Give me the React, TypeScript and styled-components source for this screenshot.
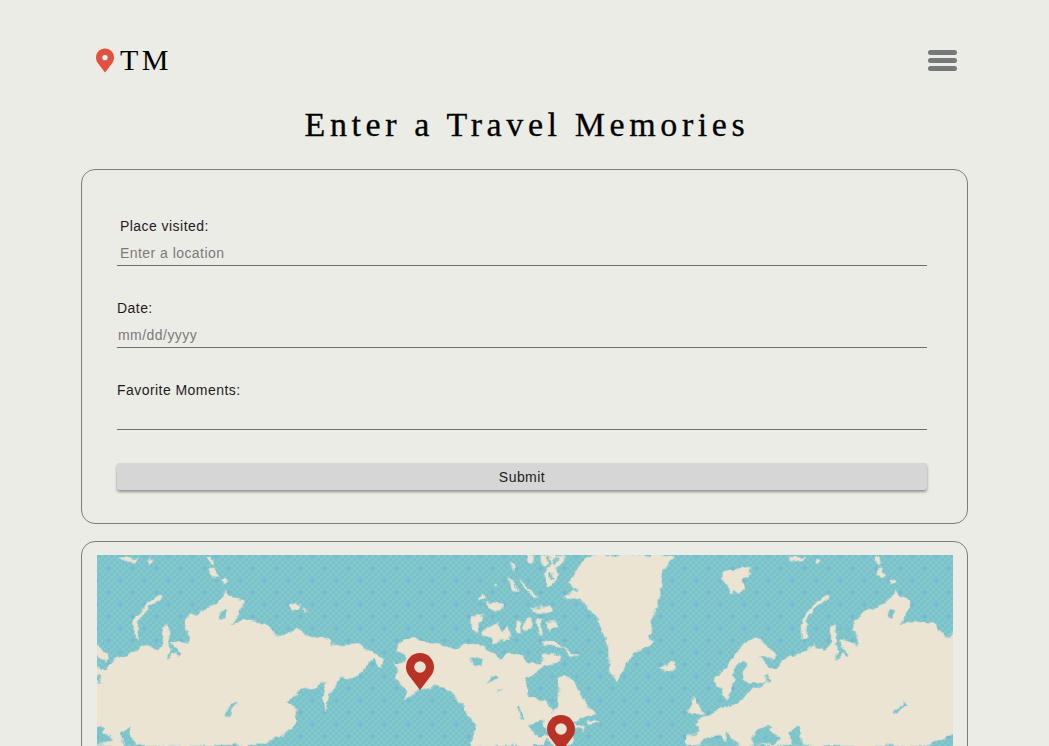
import React from "react";
import styled, { createGlobalStyle } from "styled-components";

const GlobalStyle = createGlobalStyle`
  html, body {
    margin: 0;
    height: 746px;
    overflow: hidden;
    background: #ecece6;
  }
`;

const Page = styled.div`
  padding: 0 81px;
  font-family: "Liberation Sans", Arial, sans-serif;
  color: #1c1c1c;
`;

const Header = styled.header`
  height: 103px;
  padding: 0 11px 0 15px;
  display: flex;
  align-items: flex-end;
  justify-content: space-between;
  box-sizing: border-box;
`;

const Brand = styled.div`
  display: flex;
  align-items: center;
  gap: 6px;
  height: 60px;
  margin-bottom: 13px;
  font-family: "Liberation Serif", serif;
  font-size: 30px;
  letter-spacing: 3.4px;
  color: #000;
`;

const Burger = styled.button`
  width: 29px;
  height: 60px;
  margin-bottom: 13px;
  padding: 0;
  border: 0;
  background: none;
  display: flex;
  flex-direction: column;
  justify-content: center;
  gap: 3px;
`;

const BurgerBar = styled.span`
  display: block;
  height: 5px;
  border-radius: 3px;
  background: #76787a;
`;

const Title = styled.h1`
  margin: 0 0 25px;
  padding-left: 5px;
  height: 41px;
  line-height: 44px;
  text-align: center;
  font-family: "Liberation Serif", serif;
  font-size: 34px;
  font-weight: 400;
  letter-spacing: 4.6px;
  -webkit-text-stroke: 0.3px #000;
  color: #000;
`;

const Card = styled.section`
  border: 1px solid #7f7f7a;
  border-radius: 14px;
`;

const FormCard = styled(Card)`
  padding: 48px 40px 33px 35px;
  margin-bottom: 17px;
`;

const Field = styled.label`
  display: block;
  margin-bottom: 34px;

  &:last-of-type {
    margin-bottom: 33px;
  }
`;

const FieldLabel = styled.span<{ $indent?: boolean }>`
  display: block;
  height: 17px;
  line-height: 17px;
  padding-left: ${(p) => (p.$indent ? 3 : 0)}px;
  font-size: 14px;
  letter-spacing: 0.45px;
`;

const FieldInput = styled.input<{ $indent?: boolean }>`
  display: block;
  width: 100%;
  height: 31px;
  box-sizing: border-box;
  padding: 6px 0 0 ${(p) => (p.$indent ? 3 : 1)}px;
  border: 0;
  border-bottom: 1px solid #6f6f6b;
  border-radius: 0;
  background: transparent;
  outline: none;
  font-family: "Liberation Sans", Arial, sans-serif;
  font-size: 14px;
  letter-spacing: 0.45px;

  &::placeholder {
    color: #7b7b78;
    opacity: 1;
  }
`;

const SubmitButton = styled.button`
  display: block;
  width: 100%;
  height: 27px;
  padding: 1px 0 0;
  border: 0;
  border-radius: 3px;
  background: #d6d6d6;
  box-shadow: 0 2px 3px rgba(0, 0, 0, 0.38);
  font-family: "Liberation Sans", Arial, sans-serif;
  font-size: 14px;
  letter-spacing: 0.45px;
  color: #1c1c1c;
`;

const MapCard = styled(Card)`
  padding: 13px 14px 14px 15px;
`;

const MapFrame = styled.div`
  position: relative;
  height: 191px;
  overflow: hidden;
  background: #7cc3cc;
`;

const MapArt = styled.svg`
  display: block;
  width: 856px;
  height: 191px;
`;

const Marker = styled.svg<{ $left: number; $top: number }>`
  position: absolute;
  left: ${(p) => p.$left}px;
  top: ${(p) => p.$top}px;
  width: 28px;
  height: 37px;
`;

const LAND = "#ece4d2";

// coastlines are traced in map units (3 units = 1px)
const EURASIA =
  "M497,618 L497,590 L540,575 L525,545 L550,530 L600,505 L640,498 L670,480 L685,455 L730,440 L735,425 L690,430 L675,420 L665,400 L685,370 L660,365 L640,400 L640,440 L620,480 L605,445 L585,440 L585,410 L620,385 L640,345 L670,310 L710,295 L745,320 L770,345 L760,365 L735,350 L722,345 L745,385 L760,390 L790,360 L830,345 L860,325 L885,315 L915,330 L930,320 L930,260 L945,255 L955,300 L1005,310 L1000,270 L1000,240 L1040,215 L1080,195 L1110,175 L1125,150 L1145,175 L1170,180 L1170,205 L1135,255 L1175,240 L1244,250 L1274,290 L1309,280 L1334,262 L1374,290 L1429,295 L1444,315 L1484,315 L1514,308 L1544,325 L1569,340 L1594,360 L1589,378 L1564,360 L1544,375 L1534,400 L1484,415 L1462,408 L1449,440 L1429,465 L1419,520 L1412,480 L1414,450 L1424,425 L1384,440 L1344,450 L1302,490 L1334,510 L1324,560 L1284,590 L1244,605 L1209,618 Z";

const EURASIA_ISLANDS = [
  "M1066,50 L1078,50 L1082,72 L1072,75 Z",
  "M1070,85 L1088,82 L1098,108 L1082,113 Z",
  "M1108,120 L1122,115 L1128,130 L1112,135 Z",
  "M1312,195 L1328,190 L1346,200 L1338,212 L1318,210 Z",
  "M1350,207 L1376,211 L1360,214 Z",
  "M800,52 L826,50 L860,55 L845,64 L815,60 Z",
  "M890,52 L906,60 L895,70 Z",
];

const EURASIA_WATERS = [
  "M945,358 L965,335 L955,300 L960,272",
  "M965,325 L985,345",
  "M972,265 L1003,280 L1010,310",
  "M738,405 L745,430",
  "M1154,487 L1124,522",
];

const EURASIA_BASINS = [
  "M540,618 L560,592 L600,585 L620,605 L612,572 L660,618 Z",
  "M700,618 L700,585 L715,565 L760,560 L750,575 L780,600 L760,612 Z",
  "M805,575 L835,560 L840,585 L850,618 L820,618 L810,595 Z",
  "M1100,215 L1125,208 L1120,235 L1105,235 Z",
];

const NORTH_AMERICA =
  "M945,325 L975,295 L1010,295 L1060,310 L1120,325 L1160,310 L1195,313 L1230,330 L1265,355 L1285,335 L1330,348 L1345,370 L1380,372 L1392,345 L1415,335 L1440,355 L1425,372 L1392,378 L1342,415 L1335,440 L1350,470 L1400,485 L1420,520 L1432,500 L1435,415 L1455,410 L1480,420 L1500,455 L1525,500 L1550,520 L1500,535 L1480,550 L1520,560 L1495,590 L1460,618 L1175,618 L1185,550 L1150,500 L1110,450 L1060,440 L1020,450 L1000,460 L975,480 L985,450 L945,420 L955,385 L940,370 L975,365 L975,345 Z";

const ARCTIC_ISLANDS = [
  "M1190,180 L1212,160 L1218,178 L1200,184 Z",
  "M1215,190 L1245,187 L1272,195 L1250,215 L1222,205 Z",
  "M1175,225 L1212,227 L1208,243 L1195,252 L1198,278 L1175,268 Z",
  "M1210,272 L1245,252 L1262,260 L1268,278 L1282,258 L1292,298 L1258,292 L1245,312 L1228,298 L1205,288 Z",
  "M1306,242 L1322,240 L1326,278 L1310,274 Z",
  "M1336,236 L1358,236 L1352,262 L1342,276 L1332,268 Z",
  "M1370,242 L1382,238 L1388,288 L1376,284 Z",
  "M1396,246 L1428,242 L1436,262 L1406,272 Z",
  "M1355,202 L1416,198 L1418,218 L1372,218 Z",
  "M1340,45 L1362,45 L1356,66 L1342,62 Z",
  "M1382,45 L1462,45 L1444,72 L1425,88 L1442,104 L1424,128 L1402,142 L1394,110 L1402,86 L1382,70 Z",
  "M1282,108 L1302,126 L1316,152 L1296,144 Z",
  "M1322,118 L1344,150 L1368,165 L1376,178 L1350,168 L1326,140 Z",
  "M1242,128 L1254,132 L1246,144 Z",
  "M1290,65 L1310,78 L1298,92 Z",
  "M1388,298 L1424,302 L1462,330 L1500,352 L1472,348 L1448,322 L1420,320 L1392,314 Z",
];

const ARCTIC_CHANNELS = [
  "M1400,50 L1412,66 L1392,82",
  "M1432,50 L1424,70",
  "M1410,100 L1418,118",
];

const CANADA_LAKES = [
  "M1168,360 L1208,352 L1204,378 L1182,378 Z",
  "M1218,425 L1245,407 L1258,410 L1235,428 Z",
  "M1248,450 L1272,446 L1252,454 Z",
  "M1312,500 L1318,498 L1330,535 L1322,535 Z",
  "M1350,560 L1390,540 L1402,580 L1375,592 Z",
  "M1400,590 L1420,618 L1390,618 Z",
  "M1480,560 L1510,565 L1500,590 L1480,600 Z",
];

const GREENLAND =
  "M465,45 L430,90 L420,170 L395,240 L390,300 L400,310 L340,340 L310,385 L290,430 L265,385 L260,310 L230,230 L190,185 L130,170 L170,150 L145,130 L190,60 L205,45 Z";

const NORTH_ATLANTIC_ISLANDS = [
  "M420,385 L460,360 L465,385 L435,400 Z",
  "M605,95 L690,80 L690,100 L665,125 L675,150 L635,160 L610,115 Z",
  "M520,465 L530,490 L550,525 L515,525 L500,510 L515,490 Z",
  "M200,545 L225,540 L240,548 L210,555 Z",
];

const Eurasia = ({ x }: { x: number }) => (
  <g transform={`translate(${x} 0)`}>
    <path d={EURASIA} fill={LAND} />
    {EURASIA_ISLANDS.map((d) => (
      <path key={d} d={d} fill={LAND} />
    ))}
    {EURASIA_BASINS.map((d) => (
      <path key={d} d={d} fill="url(#water)" />
    ))}
    {EURASIA_WATERS.map((d) => (
      <path key={d} d={d} fill="none" stroke="url(#water)" strokeWidth={9} />
    ))}
    <path
      d="M925,170 Q875,195 860,230 Q845,260 855,290"
      fill="none"
      stroke={LAND}
      strokeWidth={12}
      strokeLinecap="round"
    />
  </g>
);

const WorldMap = () => (
  <MapArt viewBox="51 45 2568 573" preserveAspectRatio="none">
    <defs>
      <pattern id="checker" width="18" height="18" patternUnits="userSpaceOnUse">
        <rect width="18" height="18" fill="#7ac2ca" />
        <rect width="9" height="9" fill="#84c7cc" />
        <rect x="9" y="9" width="9" height="9" fill="#84c7cc" />
      </pattern>
      <pattern id="water" width="72" height="72" patternUnits="userSpaceOnUse">
        <rect width="72" height="72" fill="url(#checker)" />
        <rect x="9" y="9" width="9" height="9" fill="#74b6d4" />
        <rect x="45" y="45" width="9" height="9" fill="#7abad6" />
      </pattern>
      <filter id="coast" x="-5%" y="-5%" width="110%" height="110%" colorInterpolationFilters="sRGB">
        <feTurbulence type="fractalNoise" baseFrequency="0.035" numOctaves="3" seed="7" />
        <feDisplacementMap in="SourceGraphic" scale="22" xChannelSelector="R" yChannelSelector="G" />
        <feGaussianBlur stdDeviation="1.5" />
      </filter>
    </defs>
    <rect x="51" y="45" width="2568" height="573" fill="url(#water)" />
    <g filter="url(#coast)">
      <Eurasia x={-684} />
      <Eurasia x={1320} />
      <path d={NORTH_AMERICA} fill={LAND} />
      {ARCTIC_ISLANDS.map((d) => (
        <path key={d} d={d} fill={LAND} />
      ))}
      {ARCTIC_CHANNELS.map((d) => (
        <path key={d} d={d} fill="none" stroke="url(#water)" strokeWidth={8} />
      ))}
      {CANADA_LAKES.map((d) => (
        <path key={d} d={d} fill="url(#water)" />
      ))}
      <g transform="translate(1320 0)">
        <path d={GREENLAND} fill={LAND} />
        {NORTH_ATLANTIC_ISLANDS.map((d) => (
          <path key={d} d={d} fill={LAND} />
        ))}
      </g>
    </g>
  </MapArt>
);

const PIN_PATH =
  "M14 0C6.3 0 0 6.2 0 14c0 3.1 1 5.9 2.7 8.3L14 37l11.3-14.7C27 19.9 28 17.1 28 14 28 6.2 21.7 0 14 0z";

const MapPin = ({ left, top }: { left: number; top: number }) => (
  <Marker $left={left} $top={top} viewBox="0 0 28 37">
    <path d={PIN_PATH} fill="#b93226" />
    <circle cx="14" cy="14" r="5.8" fill="#ece4d2" />
  </Marker>
);

const LogoPin = () => (
  <svg width="18" height="25" viewBox="0 0 28 37">
    <path d={PIN_PATH} fill="#ea4e3a" />
    <circle cx="14" cy="14" r="6.5" fill="#a4736a" />
    <circle cx="14" cy="14" r="4" fill="#ecece6" />
  </svg>
);

export default function App() {
  return (
    <>
      <GlobalStyle />
      <Page>
        <Header>
          <Brand>
            <LogoPin />
            TM
          </Brand>
          <Burger type="button" aria-label="Menu">
            <BurgerBar />
            <BurgerBar />
            <BurgerBar />
          </Burger>
        </Header>
        <Title>Enter a Travel Memories</Title>
        <FormCard>
          <form onSubmit={(e) => e.preventDefault()}>
            <Field>
              <FieldLabel $indent>Place visited:</FieldLabel>
              <FieldInput $indent placeholder="Enter a location" />
            </Field>
            <Field>
              <FieldLabel>Date:</FieldLabel>
              <FieldInput placeholder="mm/dd/yyyy" />
            </Field>
            <Field>
              <FieldLabel>Favorite Moments:</FieldLabel>
              <FieldInput />
            </Field>
            <SubmitButton type="submit">Submit</SubmitButton>
          </form>
        </FormCard>
        <MapCard>
          <MapFrame>
            <WorldMap />
            <MapPin left={309} top={98} />
            <MapPin left={450} top={160} />
          </MapFrame>
        </MapCard>
      </Page>
    </>
  );
}
